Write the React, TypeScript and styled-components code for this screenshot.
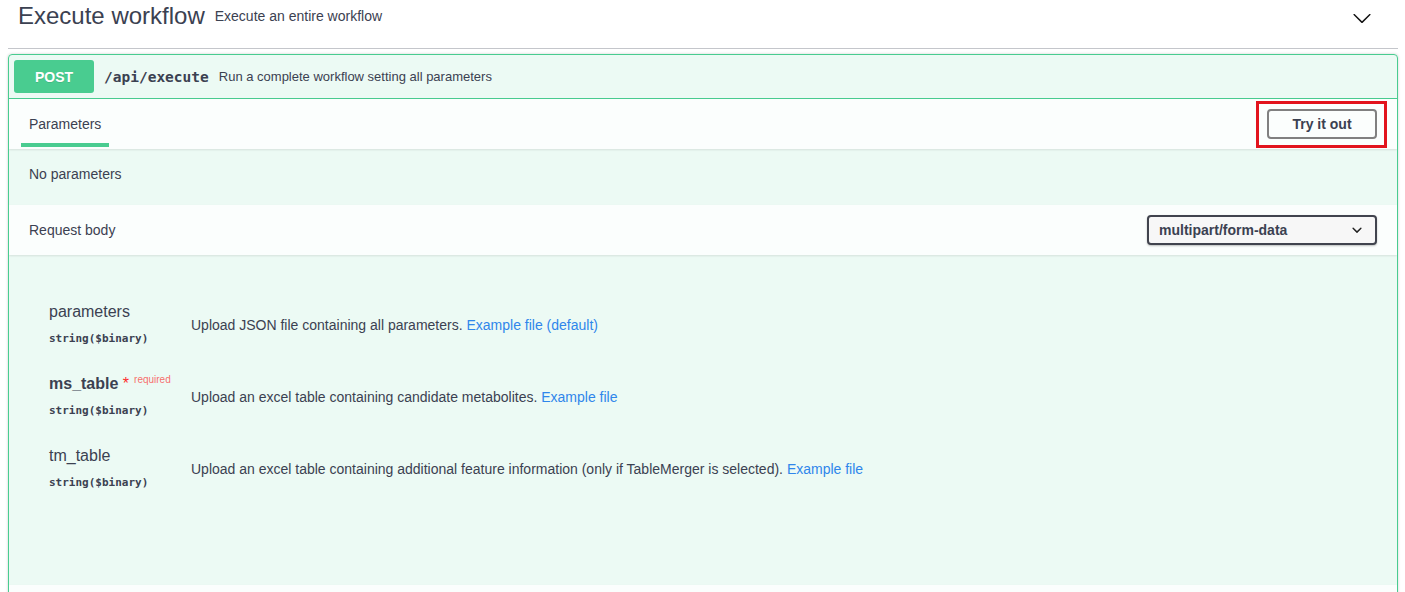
import React from "react";
import styled, { createGlobalStyle } from "styled-components";

const GlobalStyle = createGlobalStyle`
  html, body { margin: 0; padding: 0; background: #fff; overflow: hidden; }
  body { font-family: "Liberation Sans", Arial, sans-serif; color: #3b4151; }
  * { box-sizing: border-box; }
`;

const Page = styled.div`
  padding: 0 7px 0 8px;
`;

const TagHeader = styled.div`
  display: flex;
  align-items: flex-start;
  height: 49px;
  padding: 0 26px 0 10px;
  border-bottom: 1px solid #c4c6cb;
  margin-bottom: 5px;
`;

const TagTitle = styled.span`
  font-size: 24px;
  line-height: 28px;
  padding-top: 2px;
  margin-right: 10px;
  color: #3b4151;
`;

const TagDesc = styled.span`
  flex: 1;
  font-size: 14px;
  line-height: 17px;
  padding-top: 8px;
`;

const Toggle = styled.svg`
  width: 20px;
  height: 20px;
  margin-top: 8px;
  fill: #111;
`;

const Opblock = styled.div`
  border: 1px solid #49cc90;
  border-radius: 4px;
  background: rgba(73, 204, 144, 0.1);
  box-shadow: 0 0 3px rgba(0, 0, 0, 0.19);
  overflow: hidden;
`;

const Summary = styled.div`
  display: flex;
  align-items: center;
  padding: 5px;
  border-bottom: 1px solid #49cc90;
`;

const Method = styled.span`
  width: 80px;
  height: 33px;
  display: flex;
  align-items: center;
  justify-content: center;
  background: #49cc90;
  border-radius: 3px;
  color: #fff;
  font-weight: 700;
  font-size: 14px;
  text-shadow: 0 1px 0 rgba(0, 0, 0, 0.1);
`;

const Path = styled.span`
  padding: 0 10px;
  font-family: "DejaVu Sans Mono", "Liberation Mono", monospace;
  font-weight: 700;
  font-size: 14.5px;
  color: #3b4151;
`;

const SummaryDesc = styled.span`
  font-size: 13px;
  color: #3b4151;
`;

const SectionHeader = styled.div`
  display: flex;
  align-items: center;
  justify-content: space-between;
  min-height: 50px;
  padding: 8px 20px;
  background: rgba(255, 255, 255, 0.8);
  box-shadow: 0 1px 2px rgba(0, 0, 0, 0.1);
`;

const TabHeader = styled(SectionHeader)`
  align-items: stretch;
  padding: 0 20px 0 12px;
`;

const Tab = styled.div`
  display: flex;
  align-items: center;
  padding: 5px 8px 0;
  margin-bottom: 2px;
  border-bottom: 4px solid #49cc90;
  font-size: 14px;
`;

const TryButton = styled.button`
  position: relative;
  align-self: center;
  width: 110px;
  height: 30px;
  padding: 0;
  border: 2px solid #808080;
  border-radius: 4px;
  background: transparent;
  font-family: "Liberation Sans", Arial, sans-serif;
  font-weight: 700;
  font-size: 14px;
  color: #3b4151;

  &::after {
    content: "";
    position: absolute;
    top: -10px;
    bottom: -11px;
    left: -13px;
    right: -12px;
    border: 3px solid #e2141d;
    pointer-events: none;
  }
`;

const NoParams = styled.div`
  padding: 15px 20px 21px;
  font-size: 14px;
  line-height: 20px;
`;

const HeaderTitle = styled.span`
  font-size: 14px;
`;

const Select = styled.div`
  width: 230px;
  height: 30px;
  display: flex;
  align-items: center;
  justify-content: space-between;
  padding: 0 8px 0 10px;
  border: 2px solid #41444e;
  border-radius: 4px;
  background: #f7f7f7;
  box-shadow: 0 1px 2px 0 rgba(0, 0, 0, 0.25);
  font-weight: 700;
  font-size: 14px;
  color: #3b4151;
`;

const SelectArrow = styled.svg`
  width: 20px;
  height: 20px;
  fill: #222;
`;

const Body = styled.div`
  min-height: 330px;
  padding: 37px 0 0 40px;
`;

const ParamRow = styled.div`
  display: grid;
  grid-template-columns: 142px 1fr;
  align-items: center;
  padding: 10px 0 14px;
`;

const NameCell = styled.div`
  display: flex;
  flex-direction: column;
`;

const ParamName = styled.div<{ $required?: boolean }>`
  font-size: 16px;
  line-height: 20px;
  font-weight: ${(p) => (p.$required ? 700 : 400)};
  color: #3b4151;
  white-space: nowrap;
`;

const Star = styled.span`
  color: #ff2b2b;
  font-weight: 400;
`;

const RequiredTag = styled.span`
  font-size: 10px;
  line-height: 0;
  font-weight: 400;
  padding-left: 5px;
  vertical-align: 6px;
  color: rgba(255, 0, 0, 0.6);
`;

const ParamType = styled.div`
  font-family: "DejaVu Sans Mono", "Liberation Mono", monospace;
  font-weight: 700;
  font-size: 11px;
  line-height: 14px;
  padding: 10px 0 4px;
  color: #3b4151;
`;

const Desc = styled.div`
  font-size: 14px;
  line-height: 20px;
  padding-bottom: 2px;
  color: #3b4151;
`;

const Link = styled.a`
  color: #2f86eb;
  text-decoration: none;
`;

const chevron =
  "M17.418 6.109c.272-.268.709-.268.979 0s.271.701 0 .969l-7.908 7.83c-.27.268-.707.268-.979 0l-7.908-7.830c-.27-.268-.27-.701 0-.969.271-.268.709-.268.979 0L10 13.25l7.418-7.141z";
const smallChevron =
  "M13.418 7.859a.695.695 0 0 1 .978 0 .68.68 0 0 1 0 .969l-3.908 3.83a.697.697 0 0 1-.979 0l-3.908-3.83a.68.68 0 0 1 0-.969.695.695 0 0 1 .978 0L10 11l3.418-3.141z";

const params = [
  {
    name: "parameters",
    required: false,
    desc: "Upload JSON file containing all parameters. ",
    link: "Example file (default)",
  },
  {
    name: "ms_table",
    required: true,
    desc: "Upload an excel table containing candidate metabolites. ",
    link: "Example file",
  },
  {
    name: "tm_table",
    required: false,
    desc: "Upload an excel table containing additional feature information (only if TableMerger is selected). ",
    link: "Example file",
  },
];

export default function App() {
  return (
    <Page>
      <GlobalStyle />
      <TagHeader>
        <TagTitle>Execute workflow</TagTitle>
        <TagDesc>Execute an entire workflow</TagDesc>
        <Toggle viewBox="0 0 20 20">
          <path d={chevron} />
        </Toggle>
      </TagHeader>
      <Opblock>
        <Summary>
          <Method>POST</Method>
          <Path>/api/execute</Path>
          <SummaryDesc>Run a complete workflow setting all parameters</SummaryDesc>
        </Summary>
        <TabHeader>
          <Tab>Parameters</Tab>
          <TryButton>Try it out</TryButton>
        </TabHeader>
        <NoParams>No parameters</NoParams>
        <SectionHeader>
          <HeaderTitle>Request body</HeaderTitle>
          <Select>
            <span>multipart/form-data</span>
            <SelectArrow viewBox="0 0 20 20">
              <path d={smallChevron} />
            </SelectArrow>
          </Select>
        </SectionHeader>
        <Body>
          {params.map((p) => (
            <ParamRow key={p.name}>
              <NameCell>
                <ParamName $required={p.required}>
                  {p.name}
                  {p.required && (
                    <>
                      <Star>{"\u00a0*"}</Star>
                      <RequiredTag>required</RequiredTag>
                    </>
                  )}
                </ParamName>
                <ParamType>string($binary)</ParamType>
              </NameCell>
              <Desc>
                {p.desc}
                <Link href="#">{p.link}</Link>
              </Desc>
            </ParamRow>
          ))}
        </Body>
        <SectionHeader />
      </Opblock>
    </Page>
  );
}
